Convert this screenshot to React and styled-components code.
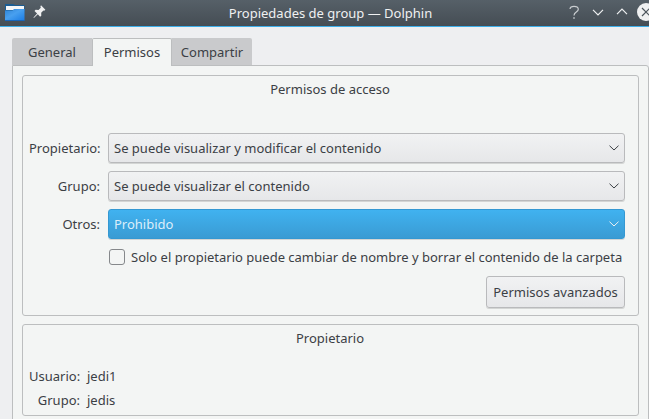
import React from "react";
import styled, { createGlobalStyle } from "styled-components";

const GlobalStyle = createGlobalStyle`
  * { box-sizing: border-box; }
  body { margin: 0; overflow: hidden; }
`;

const Window = styled.div`
  width: 649px;
  height: 419px;
  overflow: hidden;
  display: flex;
  flex-direction: column;
  background: #eeeff1;
  color: #3b4045;
  font: 13px/18px "Noto Sans", sans-serif;
  white-space: nowrap;
`;

const TitleBar = styled.header`
  flex: none;
  height: 27px;
  display: grid;
  grid-template-columns: 60px 541px 48px;
  background: linear-gradient(#566068, #454d54);
  border-bottom: 1px solid #3daee9;
  color: #eff0f1;
`;

const TitleIcons = styled.div`
  display: flex;
  padding-left: 4px;
  gap: 7px;
  svg { flex: none; display: block; }
`;

const Title = styled.h1`
  margin: 0;
  padding-top: 4px;
  font: inherit;
  text-align: center;
`;

const WindowControls = styled.div`
  display: flex;
  justify-content: flex-end;
  svg { flex: none; display: block; }
`;

const Tabs = styled.nav`
  flex: none;
  display: flex;
  height: 28px;
  margin: 11px 0 -1px 12px;
  z-index: 1;
`;

const Tab = styled.button`
  width: ${(p) => p.$width}px;
  height: ${(p) => (p.$active ? 28 : 27)}px;
  padding: ${(p) => (p.$active ? "0 0 1px" : "1px 0 0")};
  border: ${(p) => (p.$active ? "1px solid #bcbebf" : "0")};
  border-bottom: 0;
  border-radius: ${(p) => p.$radius || "2px 2px 0 0"};
  background: ${(p) => (p.$active ? "#f3f5f4" : "#c9cacc")};
  color: inherit;
  font: inherit;
  text-align: center;
`;

const Page = styled.main`
  flex: none;
  width: 637px;
  height: 370px;
  margin-left: 12px;
  padding: 9px;
  border: 1px solid #bcbebf;
  border-radius: 0 3px 0 0;
  background: #f3f5f4;
  display: flex;
  flex-direction: column;
  gap: 8px;
`;

const Group = styled.section`
  width: 617px;
  height: ${(p) => p.$height}px;
  border: 1px solid #bcbebf;
  border-radius: 3px;
  padding: 4px 13px 0 6px;
`;

const GroupTitle = styled.h2`
  margin: 0 -6px 0 0;
  height: 18px;
  font: inherit;
  text-align: center;
`;

const Form = styled.div`
  display: grid;
  grid-template-columns: 71px 517px;
  column-gap: 8px;
  row-gap: 8px;
  margin-top: 35px;
  align-items: center;
`;

const Label = styled.label`
  text-align: right;
`;

const Combo = styled.div`
  height: 30px;
  display: flex;
  align-items: center;
  justify-content: space-between;
  padding: 0 5px;
  border: 1px solid ${(p) => (p.$active ? "#3498d2" : "#b9babc")};
  border-radius: 3px;
  background: ${(p) =>
    p.$active
      ? "linear-gradient(#40b2f0, #3a9bd3)"
      : "linear-gradient(#f1f2f3, #e6e7e9)"};
  color: ${(p) => (p.$active ? "#dceefa" : "inherit")};
  box-shadow: 0 1px 0 rgba(0, 0, 0, 0.13);
`;

const CheckRow = styled.div`
  display: flex;
  align-items: center;
  gap: 6px;
  height: 18px;
  margin: 9px 0 0 80px;
`;

const CheckBox = styled.span`
  flex: none;
  width: 16px;
  height: 16px;
  border: 1px solid #85888b;
  border-radius: 3px;
`;

const ButtonRow = styled.div`
  display: flex;
  justify-content: flex-end;
  margin-top: 10px;
`;

const PushButton = styled.button`
  width: 139px;
  height: 32px;
  padding: 0;
  border: 1px solid #b9babc;
  border-radius: 3px;
  background: linear-gradient(#f1f2f3, #e6e7e9);
  box-shadow: 0 1px 0 rgba(0, 0, 0, 0.13);
  color: inherit;
  font: inherit;
`;

const Ownership = styled.dl`
  display: grid;
  grid-template-columns: 51px auto;
  column-gap: 7px;
  row-gap: 6px;
  margin: 20px 0 0;
  dt { text-align: right; }
  dd { margin: 0; }
`;

function FolderIcon() {
  return (
    <svg width="22" height="26" viewBox="0 0 22 26">
      <defs>
        <linearGradient id="folder" x1="0" y1="0" x2="1" y2="1">
          <stop offset="0" stopColor="#2f83d6" />
          <stop offset="0.45" stopColor="#48a0ef" />
          <stop offset="1" stopColor="#1b7ce4" />
        </linearGradient>
      </defs>
      <path d="M1 4h8l2 1h9.500V12H1z" fill="#1a5d94" />
      <path d="M2 6h18v4H2z" fill="#f3f6f8" />
      <path d="M1 10.500h7.500L10 9h10.500v11.500H1z" fill="url(#folder)" />
      <path d="M1 20.500h19.500" stroke="#1765ba" />
    </svg>
  );
}

function PinIcon() {
  return (
    <svg width="13" height="26" viewBox="0 0 13 26" fill="#eff0f1">
      <path d="M8 5.300l4.400 4.400-1.200 1-.8-.2-2.200 2.300.1 2.900-1.200 1L4.800 14.300.9 18l-.4-.4 3.600-4.100L1.500 11l1.100-1.200 2.900.2 2.300-2.200-.4-1.200z" />
    </svg>
  );
}

function ControlIcons() {
  return (
    <svg width="84" height="26" viewBox="0 0 84 26" fill="none" stroke="#eff0f1" strokeWidth="1.200">
      <path d="M5 9c.2-2 1.600-2.700 4-2.700 2.700 0 4.300 1 4.300 3 0 3-4.300 2.500-4.300 6.200" stroke="#c9cdd0" />
      <path d="M8 18h2" stroke="#8e959a" strokeWidth="2" />
      <path d="M28 9.800l5 5 5-5M52 14.200l5-5 5 5" />
      <circle cx="81" cy="12" r="9" fill="#eff0f1" stroke="none" />
      <path d="M77 8l8 8M85 8l-8 8" stroke="#4b545b" />
    </svg>
  );
}

function Chevron({ color = "#3b4045" }) {
  return (
    <svg width="10" height="6" viewBox="0 0 10 6" fill="none" stroke={color}>
      <path d="M.5.700L5 5 9.500.700" />
    </svg>
  );
}

const permissions = [
  { label: "Propietario:", value: "Se puede visualizar y modificar el contenido" },
  { label: "Grupo:", value: "Se puede visualizar el contenido" },
  { label: "Otros:", value: "Prohibido", active: true },
];

export default function App() {
  return (
    <Window>
      <GlobalStyle />
      <TitleBar>
        <TitleIcons>
          <FolderIcon />
          <PinIcon />
        </TitleIcons>
        <Title>Propiedades de group — Dolphin</Title>
        <WindowControls>
          <ControlIcons />
        </WindowControls>
      </TitleBar>
      <Tabs>
        <Tab $width={80} $radius="2px 0 0 0">General</Tab>
        <Tab $width={80} $active>Permisos</Tab>
        <Tab $width={80} $radius="0 2px 0 0">Compartir</Tab>
      </Tabs>
      <Page>
        <Group $height={241}>
          <GroupTitle>Permisos de acceso</GroupTitle>
          <Form>
            {permissions.map(({ label, value, active }) => (
              <React.Fragment key={label}>
                <Label>{label}</Label>
                <Combo $active={active}>
                  {value}
                  <Chevron color={active ? "#eff0f1" : undefined} />
                </Combo>
              </React.Fragment>
            ))}
          </Form>
          <CheckRow>
            <CheckBox />
            Solo el propietario puede cambiar de nombre y borrar el contenido de la carpeta
          </CheckRow>
          <ButtonRow>
            <PushButton>Permisos avanzados</PushButton>
          </ButtonRow>
        </Group>
        <Group $height={92}>
          <GroupTitle>Propietario</GroupTitle>
          <Ownership>
            <dt>Usuario:</dt>
            <dd>jedi1</dd>
            <dt>Grupo:</dt>
            <dd>jedis</dd>
          </Ownership>
        </Group>
      </Page>
    </Window>
  );
}
